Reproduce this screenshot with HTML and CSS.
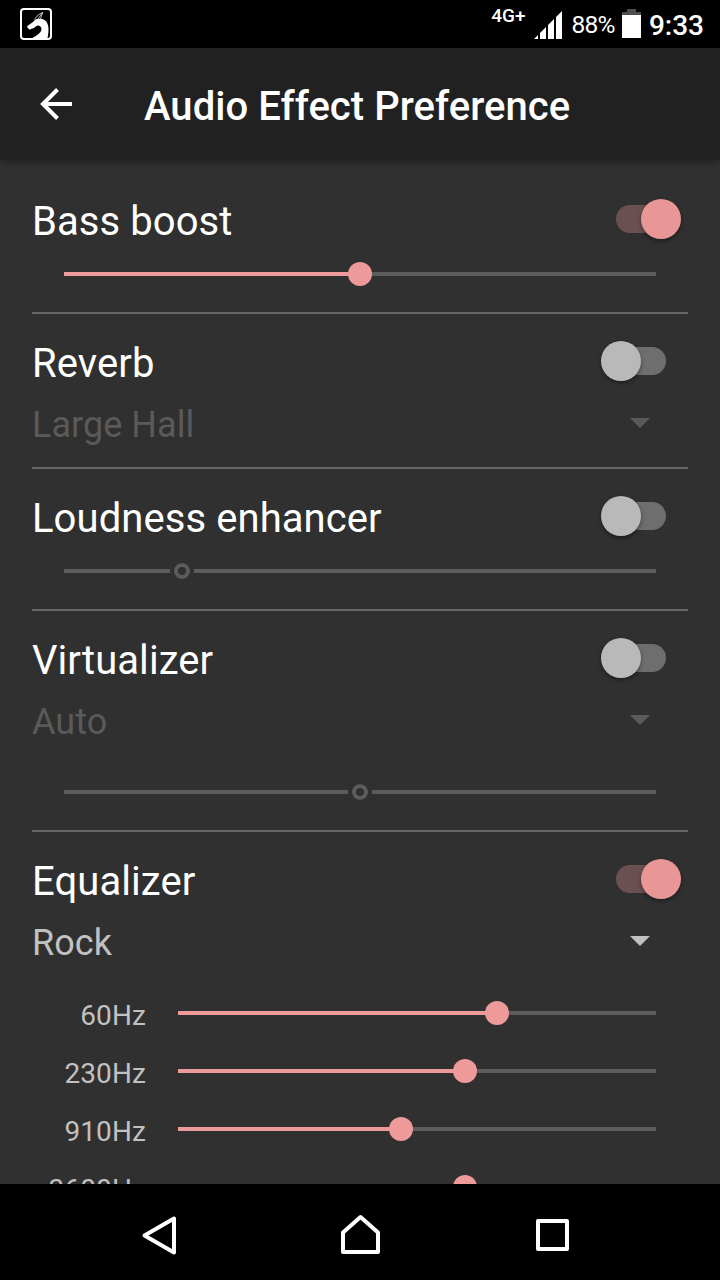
FILE: index.html
```html
<!DOCTYPE html>
<html lang="en">
<head>
<meta charset="utf-8">
<title>Audio Effect Preference</title>
<link rel="stylesheet" href="styles.css">
</head>
<body>
<div class="screen">
  <div class="status">
    <svg class="app-icon" width="32" height="32" viewBox="0 0 32 32">
      <rect x="1" y="1" width="30" height="30" rx="3" fill="none" stroke="#fff" stroke-width="2"/>
      <path d="M7.300 18L13 14L15.500 11.500C17 10.500 19 10.800 22 11C26.500 12 28.500 16 28.500 21C28.500 25 28 28 27.500 30H12.500C16.500 27.500 20.500 25.500 21.500 21.500C21.500 19 20 17.500 17.500 17.500C15.500 18 14.500 20.500 11.500 20.800C10.500 22 9 21.800 8.500 20.500C7.500 20 7 19 7.300 18Z" fill="#fff"/>
      <path d="M14.500 11.500Q17 6.500 22.800 4.300Q21.500 7 20.500 11M18 11L22.300 5" fill="none" stroke="#fff" stroke-width="0.700"/>
    </svg>
    <span class="network">4G+</span>
    <svg class="signal" width="28" height="28" viewBox="0 0 28 28" fill="#fff">
      <path d="M0 28L4 24V28ZM6 28V22L12 16V28ZM14 28V14L20 8V28ZM22 28V6L28 0V28Z"/>
    </svg>
    <span class="percent">88%</span>
    <svg class="battery" width="19" height="29" viewBox="0 0 19 29">
      <path d="M5 0H14V3H19V6H0V3H5Z" fill="#4d4d4d"/>
      <rect y="6" width="19" height="23" fill="#fff"/>
    </svg>
    <span class="clock">9:33</span>
  </div>
  <header class="toolbar">
    <svg class="back" width="34" height="34" viewBox="0 0 34 34" fill="none" stroke="#fff" stroke-width="4">
      <path d="M33 17H4M18.500 2.500L4 17L18.500 31.500"/>
    </svg>
    <h1 class="heading">Audio Effect Preference</h1>
  </header>
  <main class="content">
    <section class="effect">
      <div class="title-row"><h2 class="title">Bass boost</h2><span class="switch on"><i class="knob"></i></span></div>
      <div class="slider"><span class="fill" style="width:50%"></span><i class="thumb"></i><span class="rest"></span></div>
    </section>
    <section class="effect">
      <div class="title-row"><h2 class="title">Reverb</h2><span class="switch"><i class="knob"></i></span></div>
      <div class="select disabled"><span>Large Hall</span><i class="caret"></i></div>
    </section>
    <section class="effect">
      <div class="title-row"><h2 class="title">Loudness enhancer</h2><span class="switch"><i class="knob"></i></span></div>
      <div class="slider disabled"><span class="fill" style="width:20%"></span><i class="thumb"></i><span class="rest"></span></div>
    </section>
    <section class="effect">
      <div class="title-row"><h2 class="title">Virtualizer</h2><span class="switch"><i class="knob"></i></span></div>
      <div class="select disabled"><span>Auto</span><i class="caret"></i></div>
      <div class="slider below disabled"><span class="fill" style="width:50%"></span><i class="thumb"></i><span class="rest"></span></div>
    </section>
    <section class="effect">
      <div class="title-row"><h2 class="title">Equalizer</h2><span class="switch on"><i class="knob"></i></span></div>
      <div class="select"><span>Rock</span><i class="caret"></i></div>
      <div class="bands">
        <div class="band"><span class="freq">60Hz</span><div class="slider"><span class="fill" style="width:66.7%"></span><i class="thumb"></i><span class="rest"></span></div></div>
        <div class="band"><span class="freq">230Hz</span><div class="slider"><span class="fill" style="width:60%"></span><i class="thumb"></i><span class="rest"></span></div></div>
        <div class="band"><span class="freq">910Hz</span><div class="slider"><span class="fill" style="width:46.7%"></span><i class="thumb"></i><span class="rest"></span></div></div>
        <div class="band"><span class="freq">3600Hz</span><div class="slider"><span class="fill" style="width:60%"></span><i class="thumb"></i><span class="rest"></span></div></div>
      </div>
    </section>
  </main>
  <nav class="navbar">
    <svg class="nav-icon" width="40" height="44" viewBox="0 0 40 44"><path d="M4.500 22.500L34 5.500V39.500Z"/></svg>
    <svg class="nav-icon" width="40" height="44" viewBox="0 0 40 44"><path d="M20.500 4L38 19.500V39H3V19.500Z"/></svg>
    <svg class="nav-icon" width="40" height="44" viewBox="0 0 40 44"><path d="M6 8H35V36H6Z"/></svg>
  </nav>
</div>
</body>
</html>
```
FILE: styles.css
```css
* { box-sizing: border-box; }

body {
  margin: 0;
  background: #303030;
  color: #fff;
  font-family: Roboto, "Liberation Sans", sans-serif;
}

.screen {
  display: flex;
  flex-direction: column;
  width: 720px;
  height: 1280px;
  overflow: hidden;
}

.status {
  display: flex;
  flex: none;
  align-items: flex-start;
  height: 48px;
  padding: 0 16px 0 20px;
  background: #000;
}
.app-icon { margin-top: 8px; }
.network {
  margin: 5px 9px 0 auto;
  font-size: 19px;
  font-weight: 500;
  line-height: 22px;
}
.signal { margin-top: 11px; }
.percent {
  margin: 8px 7px 0 9px;
  font-size: 24.500px;
  letter-spacing: -0.700px;
  line-height: 34px;
}
.battery { margin-top: 9px; }
.clock {
  margin: 9px 0 0 8px;
  font-size: 28px;
  font-weight: 500;
  line-height: 34px;
}

.toolbar {
  display: flex;
  flex: none;
  z-index: 1;
  align-items: center;
  height: 112px;
  padding-left: 39px;
  background: #212121;
  box-shadow: 0 2px 5px rgba(0, 0, 0, 0.3);
}
.heading {
  margin: 5px 0 0 71px;
  font-size: 40px;
  font-weight: 500;
  letter-spacing: 0.050px;
  line-height: 47px;
}

.content {
  flex: 1;
  min-height: 0;
  overflow: hidden;
  padding: 12px 32px 0;
}
.effect {
  padding: 26px 0 9px;
  border-bottom: 2px solid #676767;
}
.title-row {
  display: flex;
  justify-content: space-between;
  height: 47px;
  padding-right: 22px;
}
.title {
  margin: 0;
  font-size: 40px;
  font-weight: 400;
  letter-spacing: 0.080px;
  line-height: 47px;
}

.switch {
  display: flex;
  align-items: center;
  width: 50px;
  height: 28px;
  margin-top: 7px;
  border-radius: 14px;
  background: #6e6e6e;
}
.switch.on {
  justify-content: flex-end;
  background: #6b5051;
}
.knob {
  flex: none;
  width: 40px;
  height: 40px;
  margin: 0 -15px;
  border-radius: 50%;
  background: #b9b9b9;
  box-shadow: 0 2px 4px rgba(0, 0, 0, 0.4);
}
.switch.on .knob { background: #e99696; }

.slider {
  display: flex;
  align-items: center;
  height: 58px;
  margin: 0 32px;
}
.slider.below { margin-top: 8px; }
.fill {
  flex: none;
  height: 4px;
  background: #ef9a9a;
}
.rest {
  flex: 1;
  height: 4px;
  background: #5c5c5c;
}
.thumb {
  flex: none;
  z-index: 1;
  width: 24px;
  height: 24px;
  margin: 0 -12px;
  border-radius: 50%;
  background: #ef9a9a;
}
.slider.disabled .fill { background: #5c5c5c; }
.slider.disabled .thumb {
  border: 4px solid #303030;
  background: radial-gradient(circle, #303030 3.7px, #5c5c5c 4.5px);
  background-clip: padding-box;
  background-origin: padding-box;
}

.select {
  display: flex;
  justify-content: space-between;
  height: 71px;
  padding-right: 38px;
  color: #c1c1c1;
  font-size: 36px;
}
.select span {
  padding-top: 5px;
  letter-spacing: 0.050px;
  line-height: 67px;
}
.select.disabled { color: #5a5a5a; }
.caret {
  width: 20px;
  height: 10px;
  margin-top: 31px;
  background: currentColor;
  clip-path: polygon(0 0, 100% 0, 50% 100%);
}

.bands { padding-top: 8px; }
.band {
  display: flex;
  height: 58px;
}
.freq {
  width: 114px;
  padding-top: 5px;
  color: #c1c1c1;
  font-size: 28px;
  letter-spacing: 0.100px;
  line-height: 53px;
  text-align: right;
}
.band .slider { flex: 1; }

.navbar {
  display: flex;
  flex: none;
  z-index: 1;
  gap: 160px;
  height: 96px;
  padding: 29px 0 0 140px;
  background: #000;
}
.nav-icon {
  fill: none;
  stroke: #fff;
  stroke-width: 4;
  stroke-linejoin: round;
}
.nav-icon:last-child { margin-left: -8px; }
```
